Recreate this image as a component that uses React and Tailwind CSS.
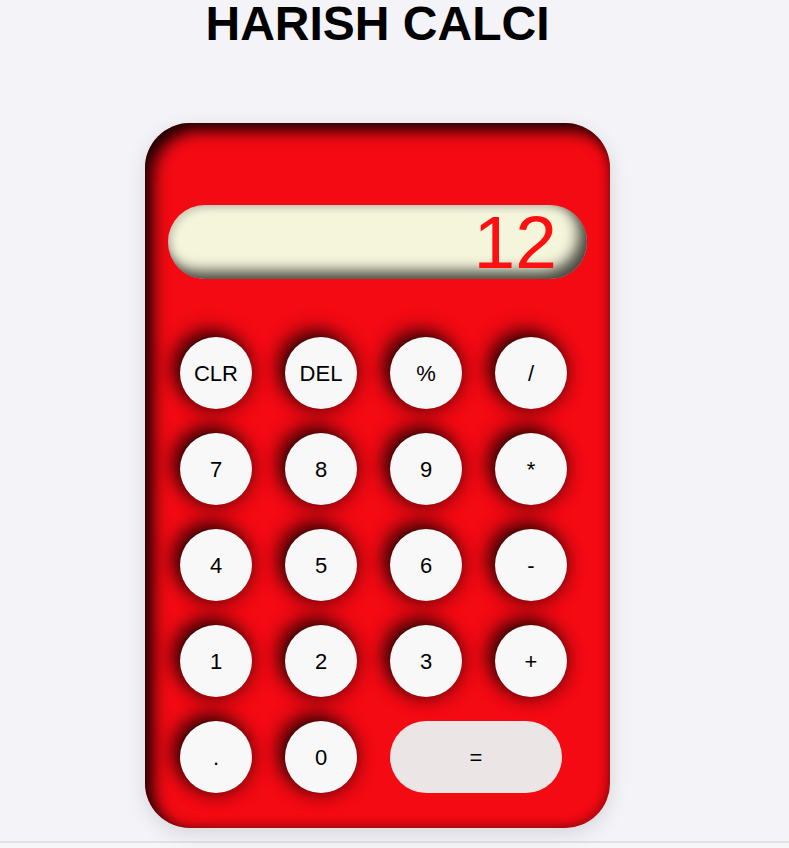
import React from "react";

const rows = [
  ["CLR", "DEL", "%", "/"],
  ["7", "8", "9", "*"],
  ["4", "5", "6", "-"],
  ["1", "2", "3", "+"],
];

function Btn({ label }) {
  return (
    <button className="w-[72px] h-[72px] rounded-full bg-[#f8f8f8] text-[22px] text-black flex items-center justify-center shadow-[-6px_-6px_20px_rgba(0,0,0,0.85),2px_4px_18px_rgba(0,0,0,0.3)]">
      {label}
    </button>
  );
}

export default function App() {
  return (
    <div className="bg-[#f6f6f6] min-h-[848px]" style={{ fontFamily: '"Liberation Sans", Arial, sans-serif' }}>
      <div className="h-[843px] bg-[#f4f3f8] border-b-2 border-[#e2e2e4] w-full">
        <div className="w-[755px] flex flex-col items-center">
          <h1 className="text-[48px] font-bold leading-[48px] text-black mt-0">HARISH CALCI</h1>
          <div className="mt-[75px] w-[465px] h-[705px] rounded-[45px] bg-[#f40a13] shadow-[inset_8px_8px_16px_rgba(0,0,0,0.9),inset_-3px_-3px_10px_rgba(0,0,0,0.25),0_6px_20px_rgba(0,0,0,0.12)] pt-[82px] px-[23px]">
            <div className="h-[74px] rounded-full bg-[#f5f5dc] flex items-center justify-end pr-[30px] shadow-[inset_-8px_-8px_14px_rgba(0,0,0,0.7),inset_3px_3px_8px_rgba(0,0,0,0.15)]">
              <span className="text-[75px] leading-none text-[#ff1010]">12</span>
            </div>
            <div className="mt-[58px] pl-[12px] flex flex-col gap-[24px]">
              {rows.map((r, i) => (
                <div key={i} className="flex gap-[33px]">
                  {r.map((l) => (
                    <Btn key={l} label={l} />
                  ))}
                </div>
              ))}
              <div className="flex gap-[33px]">
                <Btn label="." />
                <Btn label="0" />
                <button className="w-[172px] h-[72px] rounded-full bg-[#ebe5e5] text-[22px] text-black flex items-center justify-center">
                  =
                </button>
              </div>
            </div>
          </div>
        </div>
      </div>
    </div>
  );
}
